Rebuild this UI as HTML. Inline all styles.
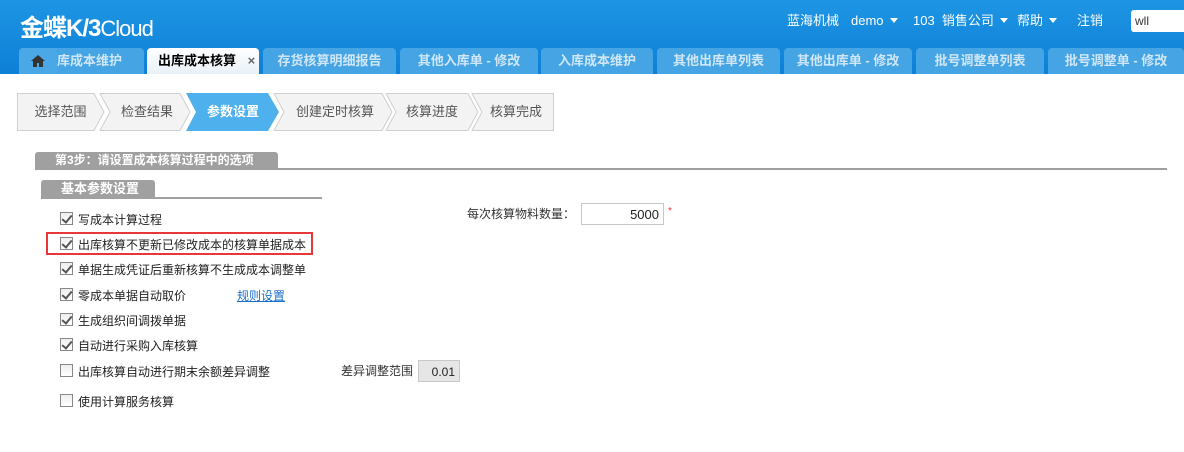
<!DOCTYPE html>
<html><head><meta charset="utf-8"><style>
*{margin:0;padding:0;box-sizing:border-box}
body{width:1184px;height:452px;background:#fff;font-family:"Liberation Sans","Noto Sans CJK SC",sans-serif;font-size:12px;color:#333;position:relative;overflow:hidden}
.hdr{position:absolute;left:0;top:0;width:1184px;height:74px;background:linear-gradient(#1e95e4,#0d80d6)}
.logo{position:absolute;left:20px;top:8px;color:#fff;font-size:24px;font-weight:bold;letter-spacing:-1px}
.logo span{font-weight:normal;font-size:22px;letter-spacing:-1px}
.nav{position:absolute;top:12px;color:#fff;font-size:13px;line-height:17px}
.tri{display:inline-block;width:0;height:0;border-left:4px solid transparent;border-right:4px solid transparent;border-top:5px solid #fff;margin-left:6px;vertical-align:2px}
.search{position:absolute;left:1131px;top:10px;width:60px;height:22px;background:#fff;border-radius:3px;font-size:12px;padding:4px 4px;color:#333}
.tab{position:absolute;top:48px;height:26px;background:#45a5e4;border-radius:4px 4px 0 0;color:#cfe6f7;font-weight:bold;font-size:13px;line-height:26px;text-align:center;overflow:hidden;white-space:nowrap}
.tab.act{background:linear-gradient(#fff,#e8f1f8);color:#000}
.st{position:absolute;top:93px;height:38px;line-height:38px;font-size:13px;color:#555;text-align:center}
.sec{position:absolute;background:#a0a0a0;color:#fff;font-weight:bold;font-size:12px;border-radius:3px 3px 0 0}
.cb{position:absolute;left:60px;width:13px;height:13px;border:1px solid #888;background:linear-gradient(#eee,#fff)}
.cb.on::after{content:"";position:absolute;left:3px;top:0px;width:4px;height:8px;border:solid #555;border-width:0 2px 2px 0;transform:rotate(40deg)}
.lb{position:absolute;left:78px;font-size:12px;color:#222}
</style></head><body>
<div class="hdr">
<div class="logo">金蝶K/3<span>Cloud</span></div>
<div class="nav" style="left:787px">蓝海机械</div>
<div class="nav" style="left:851px">demo<i class="tri"></i></div>
<div class="nav" style="left:913px">103 &nbsp;销售公司<i class="tri"></i></div>
<div class="nav" style="left:1017px">帮助<i class="tri"></i></div>
<div class="nav" style="left:1077px">注销</div>
<div class="search">wll</div>
<div class="tab" style="left:19px;width:125px;text-align:left"><span style="display:inline-block;width:38px;height:26px;vertical-align:top;background:#4aa8e6;position:relative"><svg width="14" height="12" viewBox="0 0 14 12" style="position:absolute;left:12px;top:7px"><path d="M7 0L0 6h2v6h4V8h2v4h4V6h2z" fill="#333"/></svg></span>库成本维护</div>
<div class="tab act" style="left:147px;width:112px;text-align:left;padding-left:11px">出库成本核算 <span style="color:#666;margin-left:8px">×</span></div>
<div class="tab" style="left:263px;width:133px">存货核算明细报告</div>
<div class="tab" style="left:400px;width:138px">其他入库单 - 修改</div>
<div class="tab" style="left:541px;width:112px">入库成本维护</div>
<div class="tab" style="left:657px;width:123px">其他出库单列表</div>
<div class="tab" style="left:784px;width:128px">其他出库单 - 修改</div>
<div class="tab" style="left:916px;width:128px">批号调整单列表</div>
<div class="tab" style="left:1048px;width:136px">批号调整单 - 修改</div>
</div>
<svg style="position:absolute;left:0;top:0" width="600" height="140">
<g stroke="#cfcfcf" stroke-width="1" fill="#f3f3f3">
<polygon points="17.5,93.5 94,93.5 104,112 94,130.5 17.5,130.5"/>
<polygon points="100,93.5 180,93.5 190,112 180,130.5 100,130.5 110,112"/>
<polygon points="274,93.5 382,93.5 392,112 382,130.5 274,130.5 284,112"/>
<polygon points="386,93.5 468,93.5 478,112 468,130.5 386,130.5 396,112"/>
<polygon points="472,93.5 553.5,93.5 553.5,130.5 472,130.5 482,112"/>
</g>
<polygon points="186,93 268,93 279,112 268,131 186,131 196,112" fill="#4fb0ee"/>
</svg>
<div class="st" style="left:17px;width:87px">选择范围</div>
<div class="st" style="left:104px;width:86px">检查结果</div>
<div class="st" style="left:190px;width:86px;color:#fff;font-weight:bold">参数设置</div>
<div class="st" style="left:280px;width:110px">创建定时核算</div>
<div class="st" style="left:390px;width:84px">核算进度</div>
<div class="st" style="left:476px;width:80px">核算完成</div>
<div class="sec" style="left:35px;top:152px;width:243px;height:17px;line-height:17px;padding-left:20px">第3步：请设置成本核算过程中的选项</div>
<div style="position:absolute;left:35px;top:168px;width:1132px;height:2px;background:#a0a0a0"></div>
<div class="sec" style="left:41px;top:180px;width:114px;height:18px;line-height:18px;padding-left:20px;font-size:13px">基本参数设置</div>
<div style="position:absolute;left:41px;top:197px;width:281px;height:2px;background:#a0a0a0"></div>
<div class="cb on" style="top:212px"></div><div class="lb" style="top:211px">写成本计算过程</div>
<div style="position:absolute;left:46px;top:232px;width:267px;height:23px;border:2px solid #e8373a"></div>
<div class="cb on" style="top:237px"></div><div class="lb" style="top:236px">出库核算不更新已修改成本的核算单据成本</div>
<div class="cb on" style="top:262px"></div><div class="lb" style="top:261px">单据生成凭证后重新核算不生成成本调整单</div>
<div class="cb on" style="top:288px"></div><div class="lb" style="top:287px">零成本单据自动取价</div>
<div style="position:absolute;left:237px;top:287px;color:#1a6fc9;text-decoration:underline">规则设置</div>
<div class="cb on" style="top:313px"></div><div class="lb" style="top:312px">生成组织间调拨单据</div>
<div class="cb on" style="top:338px"></div><div class="lb" style="top:337px">自动进行采购入库核算</div>
<div class="cb" style="top:364px"></div><div class="lb" style="top:363px">出库核算自动进行期末余额差异调整</div>
<div class="cb" style="top:394px"></div><div class="lb" style="top:393px">使用计算服务核算</div>
<div style="position:absolute;left:467px;top:205px">每次核算物料数量：</div>
<div style="position:absolute;left:581px;top:203px;width:83px;height:22px;border:1px solid #c8c8c8;text-align:right;padding:3px 4px;font-size:13px;color:#222">5000</div>
<div style="position:absolute;left:668px;top:206px;color:#e33;font-size:10px">*</div>
<div style="position:absolute;left:341px;top:362px">差异调整范围</div>
<div style="position:absolute;left:418px;top:360px;width:42px;height:22px;border:1px solid #c8c8c8;background:#e6e6e6;text-align:right;padding:4px 4px;font-size:12px;color:#222">0.01</div>
</body></html>
